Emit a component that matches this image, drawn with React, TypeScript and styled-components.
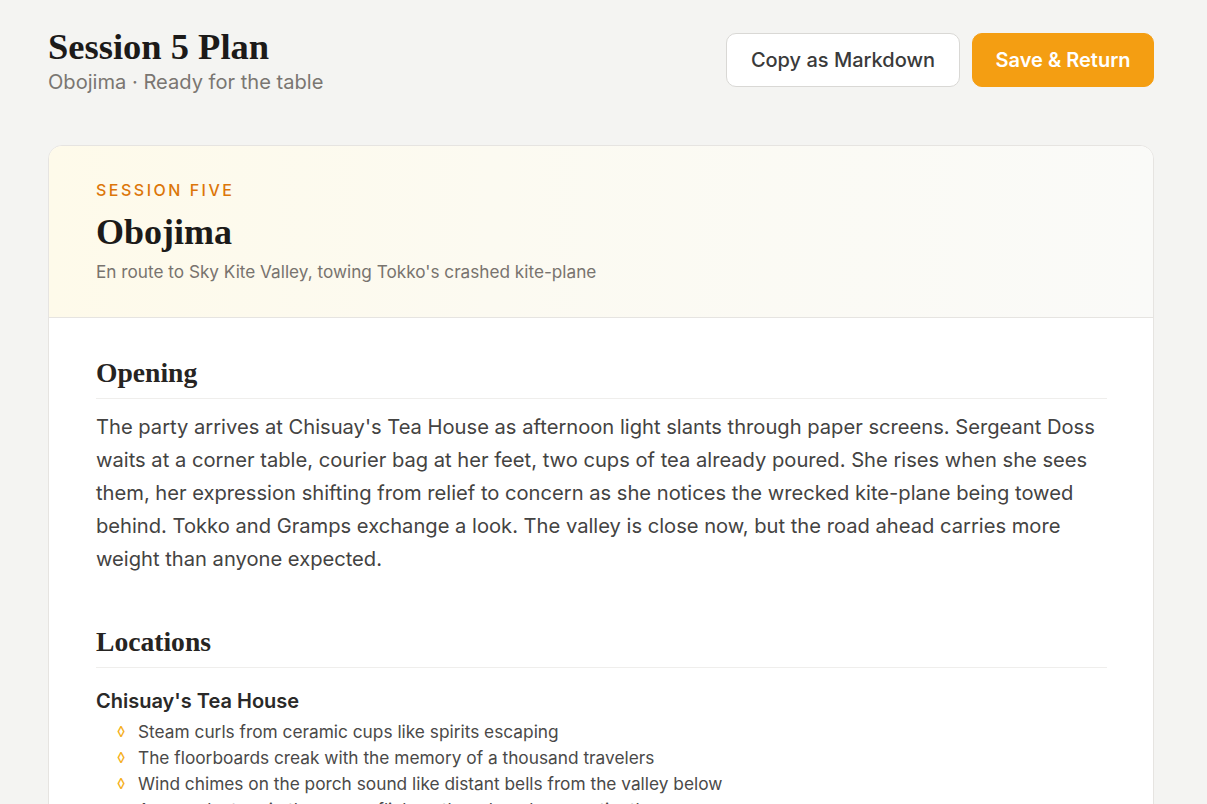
import React from "react";
import styled, { createGlobalStyle } from "styled-components";

const GlobalStyle = createGlobalStyle`
  html, body { margin: 0; padding: 0; background: #f4f4f2; }
  html::-webkit-scrollbar, body::-webkit-scrollbar { display: none; }
  html { scrollbar-width: none; }
  body { font-family: Inter, "Noto Sans", sans-serif; color: #3f3f3f; }
`;

const Page = styled.div`
  padding: 26px 53px 48px 48px;
`;

const TopBar = styled.header`
  display: flex;
  justify-content: space-between;
  align-items: flex-start;
  margin-bottom: 50px;
`;

const TitleBlock = styled.div`
  display: flex;
  flex-direction: column;
`;

const PageTitle = styled.h1`
  margin: 0;
  font-family: "Liberation Serif", "DejaVu Serif", serif;
  font-weight: 700;
  font-size: 36.5px;
  line-height: 42px;
  color: #1c1a19;
`;

const PageSub = styled.div`
  font-size: 20.1px;
  line-height: 26px;
  color: #7a7671;
  margin-top: 1px;
`;

const Actions = styled.div`
  display: flex;
  gap: 12px;
  margin-top: 7px;
`;

const Button = styled.button<{ $primary?: boolean }>`
  height: 54px;
  padding: 0 ${(p) => (p.$primary ? "22.5px" : "24px")};
  border-radius: 10px;
  font-family: Inter, sans-serif;
  font-size: 20px;
  font-weight: ${(p) => (p.$primary ? 600 : 500)};
  cursor: pointer;
  border: 1px solid ${(p) => (p.$primary ? "#f49e12" : "#d9d8d5")};
  background: ${(p) => (p.$primary ? "#f49e12" : "#ffffff")};
  color: ${(p) => (p.$primary ? "#ffffff" : "#3a3a3a")};
`;

const Card = styled.article`
  background: #ffffff;
  border: 1px solid #e6e4e1;
  border-radius: 14px;
  overflow: hidden;
`;

const CardHeader = styled.div`
  padding: 33px 47px 34px;
  background: linear-gradient(90deg, #fefaea 0%, #fcfaf1 40%, #fafaf8 100%);
  border-bottom: 1px solid #e6e4e1;
`;

const Eyebrow = styled.div`
  font-size: 16px;
  line-height: 22px;
  font-weight: 500;
  letter-spacing: 2.5px;
  color: #dc7609;
`;

const CardTitle = styled.h2`
  margin: 8px 0 6px;
  font-family: "Liberation Serif", "DejaVu Serif", serif;
  font-weight: 700;
  font-size: 36px;
  line-height: 46px;
  color: #1c1a19;
`;

const CardSub = styled.div`
  font-size: 17.2px;
  line-height: 22px;
  color: #78736e;
`;

const CardBody = styled.div`
  padding: 38px 46px 40px 47px;
`;

const Section = styled.section`
  & + & {
    margin-top: 50px;
  }
`;

const SectionTitle = styled.h3`
  margin: 0 0 11px;
  padding-bottom: 8px;
  border-bottom: 1px solid #efeeec;
  font-family: "Liberation Serif", "DejaVu Serif", serif;
  font-weight: 700;
  font-size: 27.6px;
  line-height: 34px;
  color: #262422;
`;

const Paragraph = styled.p`
  margin: 0;
  font-size: 20.15px;
  line-height: 33px;
  color: #444342;
`;

const Location = styled.div`
  margin-top: 19px;
`;

const LocationName = styled.h4`
  margin: 0 0 4px;
  font-size: 20px;
  line-height: 28px;
  font-weight: 600;
  color: #2a2928;
`;

const BulletList = styled.ul`
  list-style: none;
  margin: 0;
  padding: 0 0 0 21px;
`;

const Bullet = styled.li`
  display: flex;
  gap: 9px;
  font-size: 17.3px;
  line-height: 26px;
  color: #4a4948;
`;

const Diamond = styled.span`
  color: #f5b01c;
  font-size: 15px;
  width: 12px;
  flex: none;
`;

const bullets = [
  "Steam curls from ceramic cups like spirits escaping",
  "The floorboards creak with the memory of a thousand travelers",
  "Wind chimes on the porch sound like distant bells from the valley below",
  "A paper lantern in the corner flickers though no breeze stirs the room",
];

export default function App() {
  return (
    <>
      <GlobalStyle />
      <Page>
        <TopBar>
          <TitleBlock>
            <PageTitle>Session 5 Plan</PageTitle>
            <PageSub>Obojima · Ready for the table</PageSub>
          </TitleBlock>
          <Actions>
            <Button>Copy as Markdown</Button>
            <Button $primary>Save &amp; Return</Button>
          </Actions>
        </TopBar>
        <Card>
          <CardHeader>
            <Eyebrow>SESSION FIVE</Eyebrow>
            <CardTitle>Obojima</CardTitle>
            <CardSub>En route to Sky Kite Valley, towing Tokko's crashed kite-plane</CardSub>
          </CardHeader>
          <CardBody>
            <Section>
              <SectionTitle>Opening</SectionTitle>
              <Paragraph>
                The party arrives at Chisuay's Tea House as afternoon light slants through paper screens.
                Sergeant Doss waits at a corner table, courier bag at her feet, two cups of tea already
                poured. She rises when she sees them, her expression shifting from relief to concern as
                she notices the wrecked kite-plane being towed behind. Tokko and Gramps exchange a look.
                The valley is close now, but the road ahead carries more weight than anyone expected.
              </Paragraph>
            </Section>
            <Section>
              <SectionTitle>Locations</SectionTitle>
              <Location>
                <LocationName>Chisuay's Tea House</LocationName>
                <BulletList>
                  {bullets.map((b) => (
                    <Bullet key={b}>
                      <Diamond>◊</Diamond>
                      <span>{b}</span>
                    </Bullet>
                  ))}
                </BulletList>
              </Location>
            </Section>
          </CardBody>
        </Card>
      </Page>
    </>
  );
}
